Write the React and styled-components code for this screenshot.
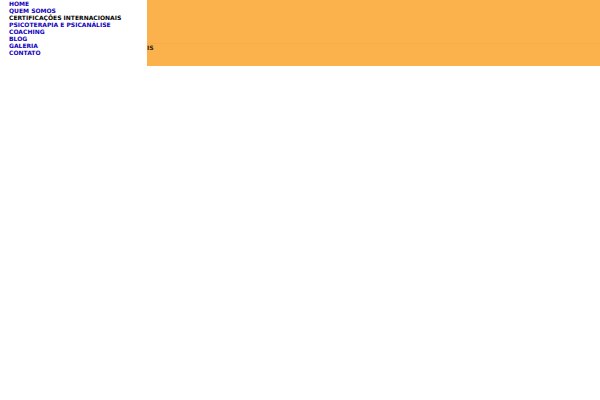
import React from "react";
import styled, { createGlobalStyle } from "styled-components";

const GlobalStyle = createGlobalStyle`
  body {
    margin: 0;
    background: #fff;
    font-family: "DejaVu Sans", Verdana, sans-serif;
    font-size: 6px;
    line-height: 7px;
    font-weight: bold;
    color: #000;
  }
`;

const Header = styled.header`
  display: flex;
`;

const Menu = styled.nav`
  flex: 0 0 147px;
  background: #fff;
`;

const MenuList = styled.ul`
  margin: 0;
  padding: 0 0 0 9px;
  list-style: none;
`;

const MenuLink = styled.a`
  color: #1100bb;
  text-decoration: none;
`;

const Content = styled.div`
  flex: 1;
  min-width: 0;
  background: #fcb24c;
`;

const Banner = styled.div`
  height: 43px;
  border-bottom: 1px solid #f6ad4b;
`;

const Title = styled.h1`
  margin: 0;
  padding-bottom: 15px;
  font-size: 6px;
  line-height: 7px;
  color: #30200c;
`;

const items = [
  { label: "HOME", href: "#home" },
  { label: "QUEM SOMOS", href: "#quem-somos" },
  { label: "CERTIFICAÇÕES INTERNACIONAIS" },
  { label: "PSICOTERAPIA E PSICANÁLISE", href: "#psicoterapia" },
  { label: "COACHING", href: "#coaching" },
  { label: "BLOG", href: "#blog" },
  { label: "GALERIA", href: "#galeria" },
  { label: "CONTATO", href: "#contato" },
];

export default function App() {
  return (
    <>
      <GlobalStyle />
      <Header>
        <Menu>
          <MenuList>
            {items.map(({ label, href }) => (
              <li key={label}>
                {href ? <MenuLink href={href}>{label}</MenuLink> : label}
              </li>
            ))}
          </MenuList>
        </Menu>
        <Content>
          <Banner />
          <Title>IS</Title>
        </Content>
      </Header>
    </>
  );
}
